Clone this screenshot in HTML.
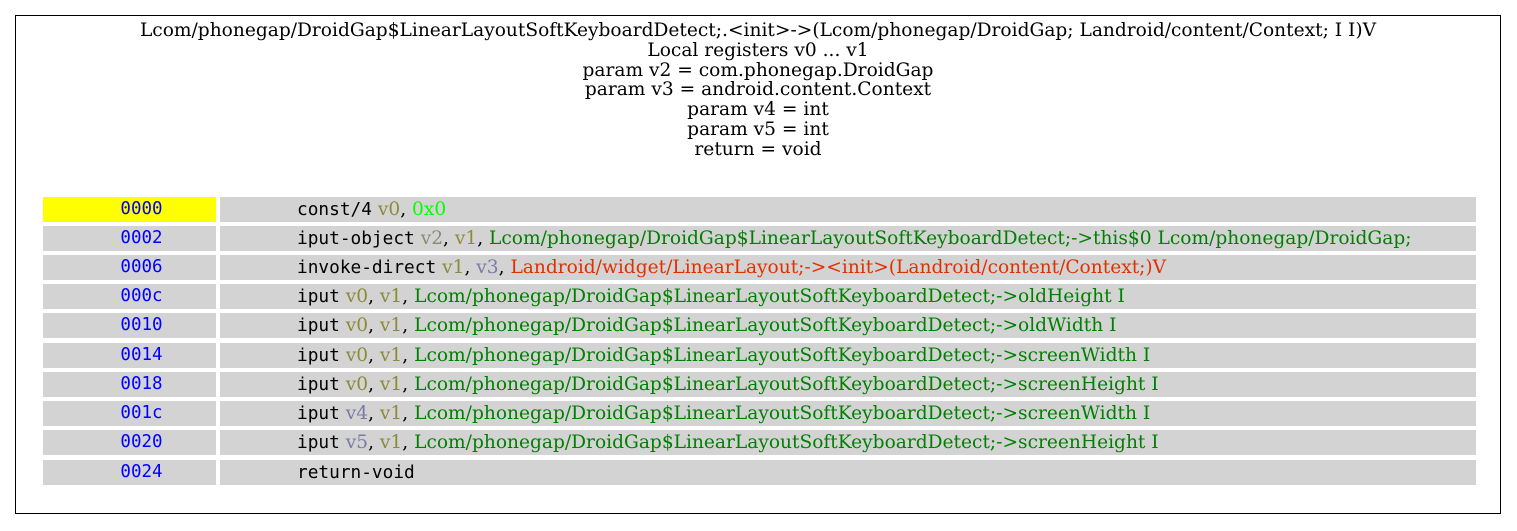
<!DOCTYPE html><html><head><style>
body{margin:0;width:1517px;height:531px;background:#fff;position:relative;overflow:hidden}
.box{position:absolute;left:15px;top:15px;width:1486px;height:499px;border:1px solid #000;box-sizing:border-box}
.hdr{position:absolute;left:15px;width:1486px;top:21px;text-align:center;font:18.6px/19.8px "DejaVu Serif",serif;color:#000}
.l,.r{position:absolute;height:25px;background:#d3d3d3}
.l{left:43px;width:173px;box-sizing:border-box;padding-left:24px;text-align:center;font:17.5px/25px "DejaVu Sans Mono",monospace;color:#0000ff}
.r{left:220px;width:1256px;font:18.6px/25px "DejaVu Serif",serif;white-space:nowrap}
.r span.c{position:absolute;left:77px}
.m{font:17.8px "DejaVu Sans Mono",monospace;color:#000}
.a{color:#8b8b3a}.b{color:#8b8b7a}.p{color:#7a7aa8}.g{color:#00ff00}.dg{color:#008000}.rd{color:#e03000}
</style></head><body>
<div class="box"></div>
<div class="hdr">Lcom/phonegap/DroidGap$LinearLayoutSoftKeyboardDetect;.&lt;init&gt;-&gt;(Lcom/phonegap/DroidGap; Landroid/content/Context; I I)V<br>Local registers v0 ... v1<br>param v2 = com.phonegap.DroidGap<br>param v3 = android.content.Context<br>param v4 = int<br>param v5 = int<br>return = void</div>

<div class="l" style="top:197px;background:#ffff00">0000</div><div class="r" style="top:197px"><span class="c"><span class="m">const/4</span> <span class="a">v0</span>, <span class="g">0x0</span></span></div>
<div class="l" style="top:226px">0002</div><div class="r" style="top:226px"><span class="c"><span class="m">iput-object</span> <span class="b">v2</span>, <span class="a">v1</span>, <span class="dg">Lcom/phonegap/DroidGap$LinearLayoutSoftKeyboardDetect;-&gt;this$0 Lcom/phonegap/DroidGap;</span></span></div>
<div class="l" style="top:255px">0006</div><div class="r" style="top:255px"><span class="c"><span class="m">invoke-direct</span> <span class="a">v1</span>, <span class="p">v3</span>, <span class="rd">Landroid/widget/LinearLayout;-&gt;&lt;init&gt;(Landroid/content/Context;)V</span></span></div>
<div class="l" style="top:284px">000c</div><div class="r" style="top:284px"><span class="c"><span class="m">iput</span> <span class="a">v0</span>, <span class="a">v1</span>, <span class="dg">Lcom/phonegap/DroidGap$LinearLayoutSoftKeyboardDetect;-&gt;oldHeight I</span></span></div>
<div class="l" style="top:313px">0010</div><div class="r" style="top:313px"><span class="c"><span class="m">iput</span> <span class="a">v0</span>, <span class="a">v1</span>, <span class="dg">Lcom/phonegap/DroidGap$LinearLayoutSoftKeyboardDetect;-&gt;oldWidth I</span></span></div>
<div class="l" style="top:343px">0014</div><div class="r" style="top:343px"><span class="c"><span class="m">iput</span> <span class="a">v0</span>, <span class="a">v1</span>, <span class="dg">Lcom/phonegap/DroidGap$LinearLayoutSoftKeyboardDetect;-&gt;screenWidth I</span></span></div>
<div class="l" style="top:372px">0018</div><div class="r" style="top:372px"><span class="c"><span class="m">iput</span> <span class="a">v0</span>, <span class="a">v1</span>, <span class="dg">Lcom/phonegap/DroidGap$LinearLayoutSoftKeyboardDetect;-&gt;screenHeight I</span></span></div>
<div class="l" style="top:401px">001c</div><div class="r" style="top:401px"><span class="c"><span class="m">iput</span> <span class="p">v4</span>, <span class="a">v1</span>, <span class="dg">Lcom/phonegap/DroidGap$LinearLayoutSoftKeyboardDetect;-&gt;screenWidth I</span></span></div>
<div class="l" style="top:430px">0020</div><div class="r" style="top:430px"><span class="c"><span class="m">iput</span> <span class="p">v5</span>, <span class="a">v1</span>, <span class="dg">Lcom/phonegap/DroidGap$LinearLayoutSoftKeyboardDetect;-&gt;screenHeight I</span></span></div>
<div class="l" style="top:460px">0024</div><div class="r" style="top:460px"><span class="c"><span class="m">return-void</span></span></div>
</body></html>
